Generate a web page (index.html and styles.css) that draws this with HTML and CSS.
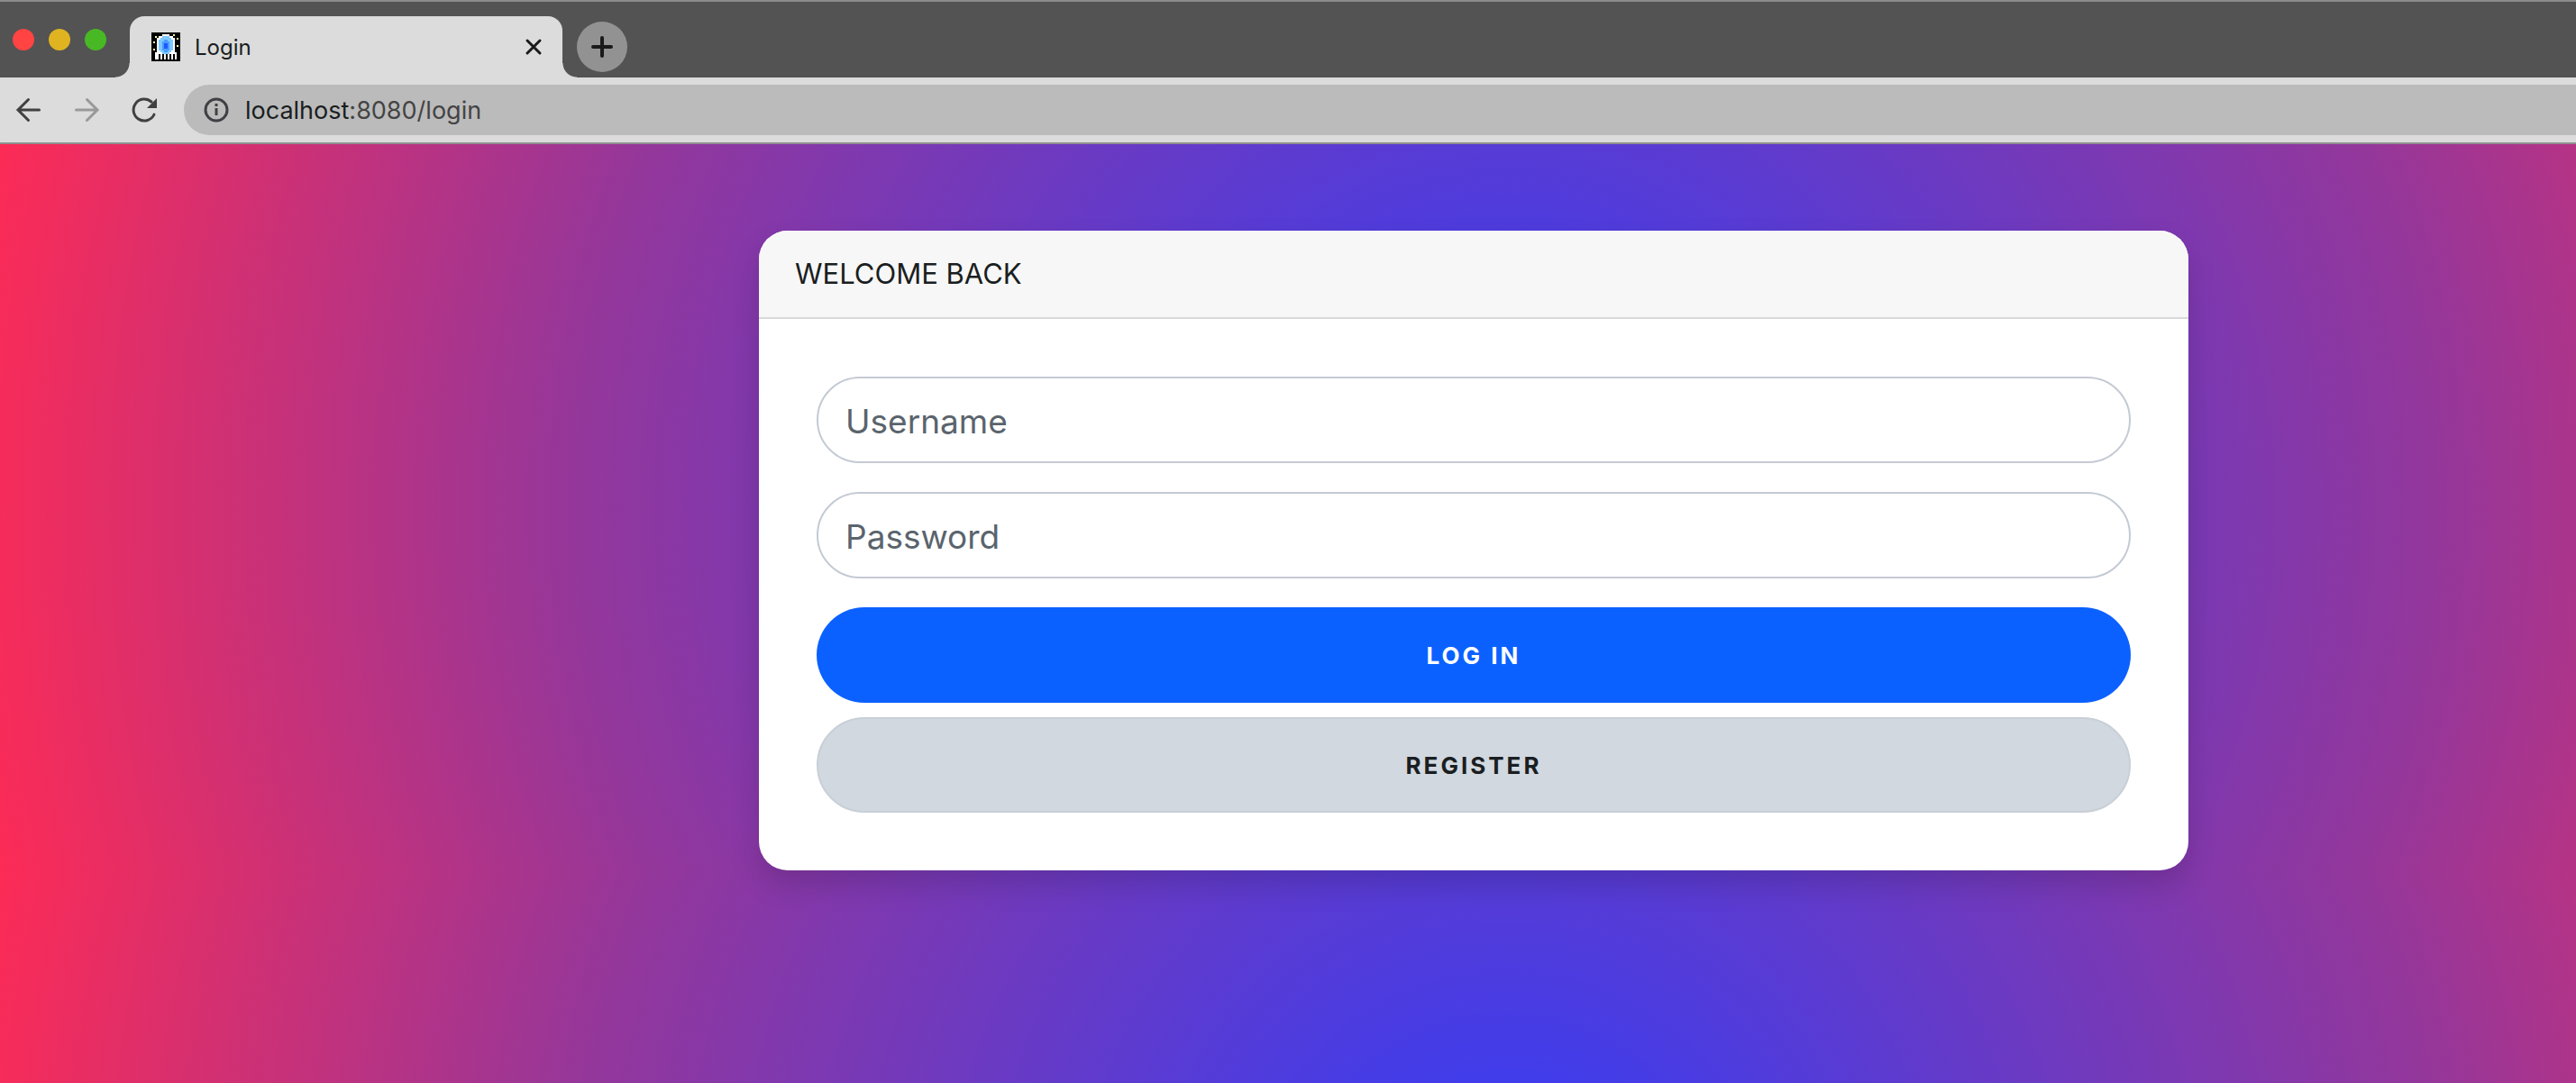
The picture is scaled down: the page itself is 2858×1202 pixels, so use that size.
FILE: index.html
```html
<!DOCTYPE html>
<html lang="en">
<head>
<meta charset="utf-8">
<title>Login</title>
<link rel="stylesheet" href="styles.css">
</head>
<body>
<header class="browser">
  <div class="tabstrip">
    <div class="lights"><span class="light red"></span><span class="light yellow"></span><span class="light green"></span></div>
    <div class="tab">
      <svg class="favicon" viewBox="0 0 16 16" shape-rendering="crispEdges" aria-hidden="true">
        <path fill="#000" d="M0 0h16v16H0z"/>
        <path fill="#fff" d="M6 1h4v1h2v1h1v8h1v4h-1v-3h-1v3h-1v-3h-1v3H9v-3H8v3H7v-3H6v3H5v-3H4v3H3v-3h0v3H2v-4h1V3h1V2h2z"/>
        <path fill="#7ec8ff" d="M6 2h4v1h1v1h1v6h-1v1h-1v1H6v-1H5v-1H4V4h1V3h1z"/>
        <path fill="#4a9cff" d="M7 4h2v1h1v5H9v1H7v-1H6V5h1z"/>
        <path fill="#1f57ff" d="M7 6h2v3H7z"/>
        <path fill="#ffffa0" d="M2 2h1v1H2zM1 5h1v1H1zM1 9h1v1H1zM12 1h1v1h-1zM14 3h1v1h-1zM14 7h1v1h-1z"/>
      </svg>
      <span class="tab-title">Login</span>
      <button class="close" aria-label="Close tab"><svg viewBox="0 0 20 20"><path d="M3 3l14 14M17 3L3 17"/></svg></button>
    </div>
    <button class="new-tab" aria-label="New tab"><svg viewBox="0 0 24 24"><path d="M12 2v20M2 12h20"/></svg></button>
  </div>
  <div class="toolbar">
    <button class="nav" aria-label="Back"><svg viewBox="0 0 32 32"><path d="M27.500 16H4.500M15.500 4.500L4 16l11.500 11.500"/></svg></button>
    <button class="nav dim" aria-label="Forward"><svg viewBox="0 0 32 32"><path d="M4.500 16h23M16.500 4.500L28 16 16.500 27.500"/></svg></button>
    <button class="nav" aria-label="Reload"><svg viewBox="0 0 32 32"><path d="M27 21A12 12 0 1 1 24 7"/><path class="solid" d="M30 3v11H19z"/></svg></button>
    <div class="address">
      <svg class="info" viewBox="0 0 28 28" aria-hidden="true"><circle cx="14" cy="14" r="12"/><path d="M14 12v8M14 7v3"/></svg>
      <span>localhost<span class="path">:8080/login</span></span>
    </div>
  </div>
</header>
<main class="page">
  <section class="card">
    <h1 class="card-header">WELCOME BACK</h1>
    <form class="card-body">
      <input class="field" type="text" placeholder="Username" aria-label="Username">
      <input class="field" type="password" placeholder="Password" aria-label="Password">
      <div class="actions">
        <button class="btn primary" type="button">LOG IN</button>
        <button class="btn secondary" type="button">REGISTER</button>
      </div>
    </form>
  </section>
</main>
</body>
</html>
```
FILE: styles.css
```css
* { box-sizing: border-box; }
body {
  margin: 0;
  min-height: 100vh;
  display: flex;
  flex-direction: column;
  font-family: Inter, "Liberation Sans", sans-serif;
  color: #1a1e21;
}
button {
  border: 0;
  padding: 0;
  background: none;
  color: #1a1a1a;
  font-family: inherit;
}
svg {
  display: block;
  fill: none;
  stroke: currentColor;
  stroke-linecap: round;
}

/* Browser frame */
.browser { background: #dcdcdc; border-bottom: 2px solid #8f8f8f; }
.tabstrip {
  display: flex;
  height: 86px;
  padding-top: 16px;
  background: #535353;
  border-top: 2px solid #8b8b8b;
}
.lights { display: flex; gap: 16px; padding: 14px 0 0 14px; width: 144px; }
.light { width: 24px; height: 24px; border-radius: 50%; }
.red { background: #ff4443; }
.yellow { background: #e0b421; }
.green { background: #48b924; }
.tab {
  position: relative;
  display: flex;
  align-items: center;
  gap: 16px;
  width: 480px;
  padding: 0 22px 0 24px;
  background: #dcdcdc;
  border-radius: 16px 16px 0 0;
}
.tab::before, .tab::after {
  content: "";
  position: absolute;
  bottom: 0;
  width: 16px;
  height: 16px;
}
.tab::before { right: 100%; background: radial-gradient(circle at 0 0, #535353 15px, #dcdcdc 16px); }
.tab::after { left: 100%; background: radial-gradient(circle at 100% 0, #535353 15px, #dcdcdc 16px); }
.favicon { width: 32px; height: 32px; stroke: none; }
.tab-title { flex: 1; font-size: 24px; }
.close svg { width: 20px; stroke-width: 3; }
.new-tab {
  display: grid;
  place-items: center;
  width: 56px;
  height: 56px;
  margin: 6px 0 0 16px;
  border-radius: 50%;
  background: #929292;
}
.new-tab svg { width: 24px; stroke-width: 4; }
.toolbar {
  display: flex;
  align-items: center;
  gap: 32px;
  padding: 8px 0 8px 16px;
}
.nav { color: #404040; }
.nav svg { width: 32px; stroke-width: 3; }
.nav .solid { fill: currentColor; stroke: none; }
.dim { color: #999; }
.address {
  flex: 1;
  display: flex;
  align-items: center;
  gap: 18px;
  height: 56px;
  margin-left: -4px;
  padding-left: 22px;
  border-radius: 28px 0 0 28px;
  background: #bbb;
  font-size: 27px;
}
.info { width: 28px; stroke-width: 3; stroke-linecap: butt; color: #404045; }
.path { color: #444; }

/* Login page */
.page {
  flex: 1;
  display: grid;
  grid-template-columns: 842fr 1586fr 430fr;
  align-items: start;
  padding-top: 96px;
  background: radial-gradient(circle, #3f3dec 9%, #94379b 60%, #fc2b56) 0 0 / 117% 806px;
}
.card {
  grid-column: 2;
  border-radius: 32px;
  background: #fff;
  box-shadow: 0 16px 32px rgba(0, 0, 0, 0.15);
}
.card-header {
  margin: 0;
  padding: 28px 40px;
  border-bottom: 2px solid #d9d9d9;
  border-radius: 32px 32px 0 0;
  background: #f7f7f7;
  font-size: 31px;
  font-weight: 400;
  line-height: 40px;
}
.card-body {
  display: flex;
  flex-direction: column;
  gap: 32px;
  padding: 64px;
}
.field {
  width: 100%;
  height: 96px;
  padding: 2px 30px 0;
  border: 2px solid #c4cad4;
  border-radius: 48px;
  font-family: inherit;
  font-size: 37px;
}
.field::placeholder { color: #5a646d; opacity: 1; }
.actions { display: flex; flex-direction: column; gap: 16px; }
.btn {
  height: 106px;
  border-radius: 53px;
  font-size: 26px;
  font-weight: 700;
  letter-spacing: 3px;
}
.primary { background: #0b61ff; color: #fff; }
.secondary { background: #d1d8e0; border: 2px solid #c8cfd7; color: #1a1e21; }
```
